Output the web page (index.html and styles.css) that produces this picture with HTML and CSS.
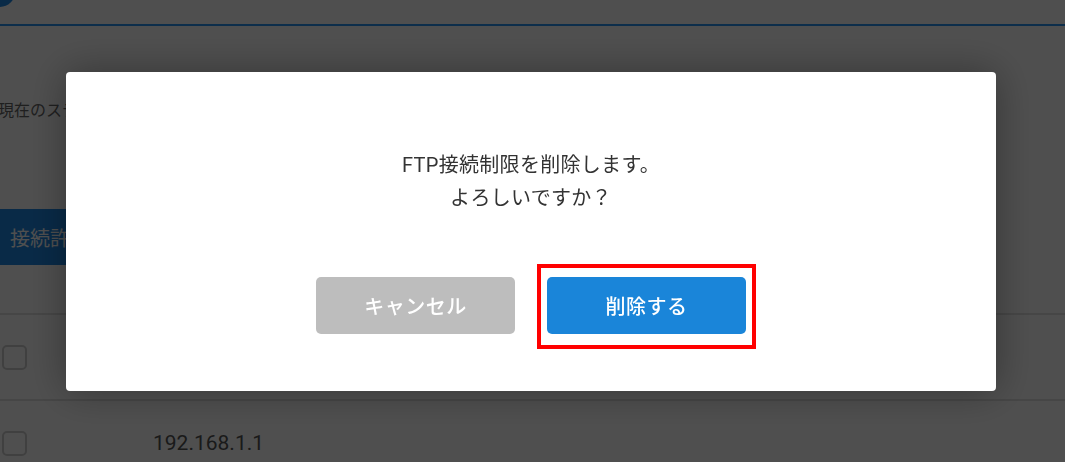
FILE: index.html
```html
<!DOCTYPE html>
<html lang="ja">

<head>
  <meta charset="UTF-8">
  <title>FTP接続制限</title>
  <link rel="stylesheet" href="styles.css">
</head>

<body>
  <div class="page">
    <header class="header">
      <span class="logo"></span>
    </header>

    <main class="content">
      <p class="status">現在のステータス：接続制限中</p>

      <button class="add-btn">接続許可IPを追加</button>

      <div class="ip-table">
        <div class="ip-row ip-head">
          <span class="cell-check"></span>
          <span class="cell-ip">IPアドレス</span>
        </div>
        <div class="ip-row">
          <span class="cell-check"><span class="checkbox"></span></span>
          <span class="cell-ip">192.168.0.1</span>
        </div>
        <div class="ip-row">
          <span class="cell-check"><span class="checkbox"></span></span>
          <span class="cell-ip">192.168.1.1</span>
        </div>
      </div>
    </main>
  </div>

  <div class="overlay">
    <div class="dialog">
      <p class="message">FTP接続制限を削除します。<br>よろしいですか？</p>
      <div class="actions">
        <button class="btn btn-cancel">キャンセル</button>
        <button class="btn btn-delete">削除する</button>
      </div>
    </div>
  </div>
</body>

</html>
```

FILE: styles.css
```css
body {
  font-family: Roboto, "Noto Sans CJK JP", sans-serif;
  margin: 0;
  padding: 0;
  background-color: #fff;
  color: #555;
  overflow: hidden;
}

.header {
  height: 24px;
  border-bottom: 2px solid #2b96f0;
  background-color: #fff;
  overflow: hidden;
}

.logo {
  display: block;
  width: 30px;
  height: 30px;
  margin: -23px 0 0 -15px;
  border-radius: 50%;
  background-color: #1e88e5;
}

.content {
  padding: 0;
}

.status {
  margin: 73px 0 0 -2px;
  font-size: 16px;
  line-height: 24px;
  color: #666;
}

.add-btn {
  display: block;
  margin-top: 86px;
  width: 240px;
  height: 56px;
  padding: 0 0 0 10px;
  border: none;
  border-radius: 0 4px 4px 0;
  background-color: #1e88e5;
  color: #fff;
  font-family: inherit;
  font-size: 20px;
  text-align: left;
}

.ip-row {
  display: flex;
  align-items: center;
  height: 86px;
  border-top: 2px solid #e2e2e2;
  box-sizing: border-box;
}

.ip-head {
  height: 48px;
  border-top: none;
  font-size: 16px;
}

.cell-check {
  width: 153px;
  padding-left: 2px;
  box-sizing: border-box;
}

.checkbox {
  display: block;
  width: 25px;
  height: 25px;
  border: 2px solid #cfcfcf;
  border-radius: 5px;
  box-sizing: border-box;
}

.cell-ip {
  font-size: 21px;
  color: #555;
}

.ip-head .cell-ip {
  font-size: 16px;
}

/* modal */

.overlay {
  position: fixed;
  inset: 0;
  background-color: rgba(0, 0, 0, 0.69);
  display: flex;
  align-items: center;
  justify-content: center;
}

.dialog {
  width: 930px;
  margin: 1px 0 0 -3px;
  padding: 77px 0 57px;
  background-color: #fff;
  border-radius: 4px;
  box-shadow: 0 0 40px rgba(0, 0, 0, 0.35);
  text-align: center;
}

.message {
  margin: 0;
  font-size: 20px;
  line-height: 33px;
  letter-spacing: 0.3px;
  color: #333;
}

.actions {
  display: flex;
  justify-content: center;
  gap: 32px;
  margin-top: 62px;
}

.btn {
  width: 199px;
  height: 57px;
  border: none;
  border-radius: 5px;
  color: #fff;
  font-family: inherit;
  font-size: 20px;
  font-weight: 500;
  letter-spacing: 0.5px;
}

.btn-cancel {
  background-color: #bdbdbd;
}

.btn-delete {
  position: relative;
  background-color: #1a85d9;
}

.btn-delete::after {
  content: "";
  position: absolute;
  top: -13px;
  bottom: -15px;
  left: -10px;
  right: -10px;
  border: 4px solid #f00;
}
```
